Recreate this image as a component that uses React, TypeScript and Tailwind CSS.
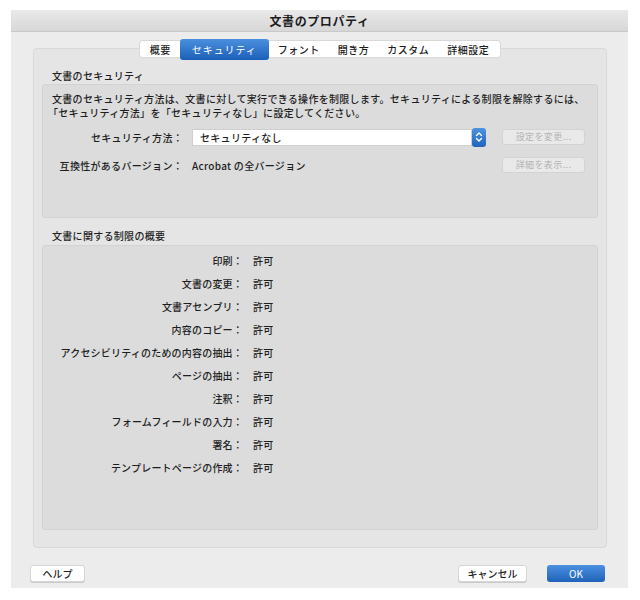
const font = { fontFamily: '"Noto Sans CJK JP", "Noto Sans", sans-serif' }

const tabs = ['概要', 'セキュリティ', 'フォント', '開き方', 'カスタム', '詳細設定']

const restrictions = [
  '印刷：',
  '文書の変更：',
  '文書アセンブリ：',
  '内容のコピー：',
  'アクセシビリティのための内容の抽出：',
  'ページの抽出：',
  '注釈：',
  'フォームフィールドの入力：',
  '署名：',
  'テンプレートページの作成：',
]

const Stepper = () => (
  <div className="w-[14px] h-[19px] rounded-[3px] bg-gradient-to-b from-[#4d93e0] to-[#1f63bd] flex items-center justify-center">
    <svg width="8" height="12" viewBox="0 0 8 12" fill="none" stroke="white" strokeWidth="1.4" strokeLinecap="round" strokeLinejoin="round">
      <path d="M1.5 4.5 L4 2 L6.5 4.5" />
      <path d="M1.5 7.5 L4 10 L6.5 7.5" />
    </svg>
  </div>
)

const DisabledButton = ({ label }: { label: string }) => (
  <div className="w-[83px] h-[16px] bg-[#e9e9e9] border border-[#d3d3d3] rounded-[3px] flex items-center justify-center text-[9px] text-[#b4b4b4] tracking-[0.4px]">
    {label}
  </div>
)

export default function App() {
  return (
    <div className="w-[640px] h-[600px] bg-white pt-[10px] pl-[11px]" style={font}>
      <div className="w-[617px] h-[578px] bg-[#ececec] flex flex-col text-[#1e1e1e]">
        <div className="h-[22px] bg-gradient-to-b from-[#e9e9e9] to-[#d7d7d7] border-b border-[#c9c9c9] flex items-center justify-center">
          <span className="text-[12px] font-bold tracking-[0.6px]">文書のプロパティ</span>
        </div>

        <div className="pt-[8px] px-[22px] pr-[21px] flex flex-col">
          <div className="relative z-10 mx-auto flex items-center h-[18px] bg-white border border-[#d8d8d8] rounded-[3px] pl-[1px] pr-[2px]">
            {tabs.map((t, i) =>
              i === 1 ? (
                <div
                  key={t}
                  className="h-[21px] -my-[2px] px-[12px] flex items-center rounded-[3px] bg-gradient-to-b from-[#4a90de] to-[#1c5fb8] text-white text-[10px] tracking-[0.9px]"
                >
                  {t}
                </div>
              ) : (
                <div key={t} className="px-[9px] flex items-center text-[10px] font-medium tracking-[0.5px]">
                  {t}
                </div>
              )
            )}
          </div>

          <div className="-mt-[10px] h-[500px] bg-[#e5e5e5] border border-[#d8d8d8] rounded-[4px] px-[8px] pt-[17px] flex flex-col">
            <div className="h-[18px] flex items-center pl-[10px] text-[10px] font-medium tracking-[0.3px]">
              文書のセキュリティ
            </div>
            <div className="h-[134px] bg-[#dbdcdb] border border-[#d2d3d2] rounded-[3px] pt-[7px] pl-[9px] pr-[12px] flex flex-col">
              <p className="text-[10px] leading-[14px] font-medium tracking-[0.3px] whitespace-nowrap">
                文書のセキュリティ方法は、文書に対して実行できる操作を制限します。セキュリティによる制限を解除するには、
              </p>
              <p className="text-[10px] leading-[14px] font-medium tracking-[0.3px] whitespace-nowrap -ml-[4px]">
                「セキュリティ方法」を「セキュリティなし」に設定してください。
              </p>

              <div className="mt-[7px] flex items-center h-[20px]">
                <div className="w-[131px] text-right text-[10px] font-medium tracking-[0.3px]">セキュリティ方法：</div>
                <div className="ml-[9px] w-[280px] h-[17px] bg-white border border-[#cfcfcf] flex items-center pl-[7px] text-[10px] font-medium tracking-[0.3px]">
                  セキュリティなし
                </div>
                <Stepper />
                <div className="ml-auto">
                  <DisabledButton label="設定を変更..." />
                </div>
              </div>

              <div className="mt-[8px] flex items-center h-[20px]">
                <div className="w-[131px] text-right text-[10px] font-medium tracking-[0.3px] whitespace-nowrap">互換性があるバージョン：</div>
                <div className="ml-[9px] text-[10px] font-medium tracking-[0.3px]">Acrobat の全バージョン</div>
                <div className="ml-auto">
                  <DisabledButton label="詳細を表示..." />
                </div>
              </div>
            </div>

            <div className="h-[27px] flex items-end pb-[2px] pl-[10px] text-[10px] font-medium tracking-[0.3px]">
              文書に関する制限の概要
            </div>
            <div className="h-[285px] bg-[#dbdcdb] border border-[#d2d3d2] rounded-[3px] pt-[3px] pl-[9px] flex flex-col">
              {restrictions.map((r) => (
                <div key={r} className="h-[23px] flex items-center text-[10px] font-medium tracking-[0.2px]">
                  <div className="w-[191px] text-right whitespace-nowrap">{r}</div>
                  <div className="ml-[10px]">許可</div>
                </div>
              ))}
            </div>
          </div>
        </div>

        <div className="mt-[17px] flex items-center pl-[19px] pr-[23px]">
          <button className="w-[55px] h-[17px] bg-white border border-[#d6d6d6] rounded-[3px] text-[10px] font-medium shadow-[0_1px_0_#cacaca]">
            ヘルプ
          </button>
          <button className="ml-auto w-[69px] h-[17px] bg-white border border-[#d6d6d6] rounded-[3px] text-[10px] font-medium shadow-[0_1px_0_#cacaca]">
            キャンセル
          </button>
          <button className="ml-[20px] w-[58px] h-[17px] rounded-[3px] bg-gradient-to-b from-[#4b91df] to-[#1f62ba] text-white text-[10px]">
            OK
          </button>
        </div>
      </div>
    </div>
  )
}
